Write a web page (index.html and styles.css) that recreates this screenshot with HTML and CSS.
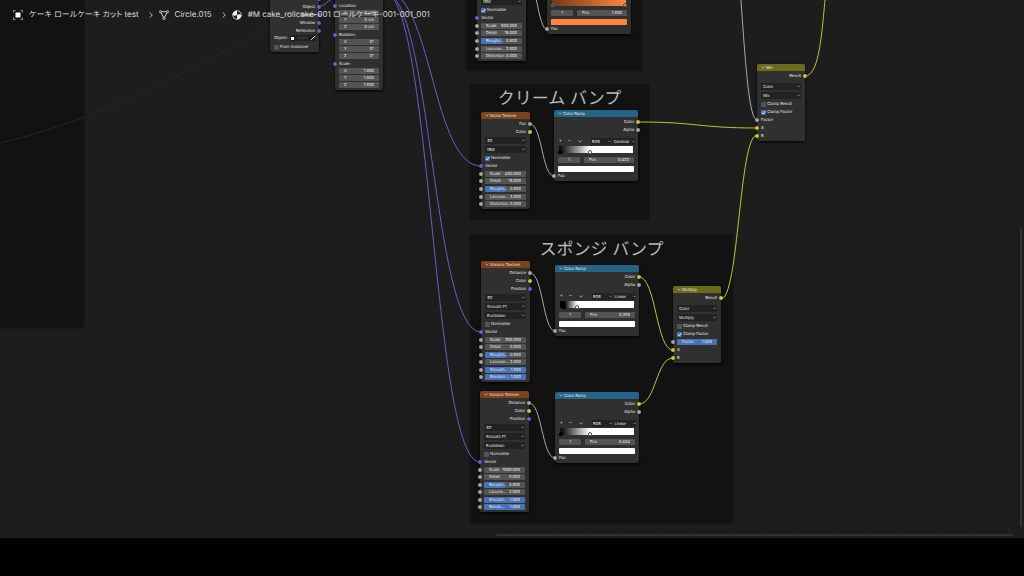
FILE: index.html
```html
<!DOCTYPE html>
<html lang="en">
<head>
<meta charset="utf-8">
<title>Shader Editor</title>
<link rel="stylesheet" href="styles.css">
</head>
<body>
<main class="editor">
  <section class="frame frame-left" aria-label="Frame"></section>
  <section class="frame frame-top" aria-label="Frame"></section>
  <section class="frame frame-cream"><h2>クリーム バンプ</h2></section>
  <section class="frame frame-sponge"><h2>スポンジ バンプ</h2></section>

  <svg class="links" aria-hidden="true">
    <path class="faint" d="M0 143C100 120 190 70 275 24"/>
    <path class="vec" d="M319 6C327 6 327 -1 335 -1"/>
    <path class="vec" d="M384 -10C432 -10 432 166 481 166"/>
    <path class="vec" d="M384 -8C432 -8 432 332 481 332"/>
    <path class="vec" d="M384 -8C432 -8 432 462 480 462"/>
    <path class="val" d="M526 -24C537 -24 537 30 548 30"/>
    <path class="val" d="M530 124C542 124 542 176 554 176"/>
    <path class="val" d="M530 273C543 273 543 331 555 331"/>
    <path class="val" d="M529 403C542 403 542 458 555 458"/>
    <path class="val" d="M727 -90C742 -90 742 120 757 120"/>
    <path class="col" d="M638 122C698 122 698 128 757 128"/>
    <path class="col" d="M805 76C825 76 822 -10 830 -30"/>
    <path class="col" d="M721 299C739 299 739 135 757 135"/>
    <path class="col" d="M639 277C656 277 656 350 673 350"/>
    <path class="col" d="M639 404C656 404 656 358 673 358"/>
  </svg>

  <article class="node n-coord">
    <header class="tex"><button aria-label="Collapse"></button>Texture Coordinate</header>
    <ul class="outs h7">
      <li>Generated<i class="s v"></i></li><li>Normal<i class="s v"></i></li><li>UV<i class="s v"></i></li>
      <li>Object<i class="s v"></i></li><li>Camera<i class="s v"></i></li><li>Window<i class="s v"></i></li><li>Reflection<i class="s v"></i></li>
    </ul>
    <label class="pick">Object:<span class="pickbox"><svg viewBox="0 0 4 4"><path fill="#fff" d="M1 1h3v3h-3z"/></svg><input placeholder="Object"><svg viewBox="0 0 4 4"><path d="M0 4L2 2M2 1L3 2M3 1L4 0" stroke="#ddd" fill="none"/></svg></span></label>
    <label class="check"><input type="checkbox">From Instancer</label>
  </article>

  <article class="node slim n-map">
    <header class="map"><button aria-label="Collapse"></button>Mapping</header>
    <ul class="outs"><li>Vector<i class="s v"></i></li></ul>
    <div class="sel"><select aria-label="Type"><option>Point</option></select></div>
    <p class="in"><i class="s v"></i>Vector</p>
    <p class="in"><i class="s v"></i>Location:</p>
    <div class="xyz"><label>X<input value="0 cm"></label><label>Y<input value="0 cm"></label><label>Z<input value="0 cm"></label></div>
    <p class="in"><i class="s v"></i>Rotation:</p>
    <div class="xyz"><label>X<input value="0°"></label><label>Y<input value="0°"></label><label>Z<input value="0°"></label></div>
    <p class="in"><i class="s v"></i>Scale:</p>
    <div class="xyz"><label>X<input value="1.000"></label><label>Y<input value="1.000"></label><label>Z<input value="1.000"></label></div>
  </article>

  <article class="node n-noise0">
    <header class="tex"><button aria-label="Collapse"></button>Noise Texture</header>
    <ul class="outs"><li>Fac<i class="s"></i></li><li>Color<i class="s c"></i></li></ul>
    <div class="sel"><select aria-label="Dimensions"><option>3D</option></select></div>
    <div class="sel"><select aria-label="Type"><option>fBM</option></select></div>
    <label class="check"><input type="checkbox" checked>Normalize</label>
    <p class="in"><i class="s v"></i>Vector</p>
    <ul class="fields h5">
      <li><i class="s"></i><label>Scale<input value="500.000"></label></li>
      <li><i class="s"></i><label>Detail<input value="15.000"></label></li>
      <li><i class="s"></i><label class="half">Roughn...<input value="0.500"></label></li>
      <li><i class="s"></i><label>Lacunar...<input value="2.000"></label></li>
      <li><i class="s"></i><label>Distortion<input value="0.000"></label></li>
    </ul>
  </article>

  <article class="node ramp n-ramp0">
    <header class="conv"><button aria-label="Collapse"></button>Color Ramp</header>
    <ul class="outs"><li>Color<i class="s c"></i></li><li>Alpha<i class="s"></i></li></ul>
    <div class="tools"><button>+</button><button>−</button><button class="down" aria-label="Tools"></button><select aria-label="Mode"><option>RGB</option></select><select aria-label="Interpolation"><option>Linear</option></select></div>
    <div class="grad g0"><i class="stop o1"></i><i class="stop o2"></i></div>
    <div class="pos"><input aria-label="Stop" value="1"><label>Pos<input value="1.000"></label></div>
    <button class="swatch orange" aria-label="Color"></button>
    <p class="in"><i class="s"></i>Fac</p>
  </article>

  <article class="node n-noise1">
    <header class="tex"><button aria-label="Collapse"></button>Noise Texture</header>
    <ul class="outs"><li>Fac<i class="s"></i></li><li>Color<i class="s c"></i></li></ul>
    <div class="sel"><select aria-label="Dimensions"><option>3D</option></select></div>
    <div class="sel"><select aria-label="Type"><option>fBM</option></select></div>
    <label class="check"><input type="checkbox" checked>Normalize</label>
    <p class="in"><i class="s v"></i>Vector</p>
    <ul class="fields h5">
      <li><i class="s"></i><label>Scale<input value="400.000"></label></li>
      <li><i class="s"></i><label>Detail<input value="15.000"></label></li>
      <li><i class="s"></i><label class="half">Roughn...<input value="0.500"></label></li>
      <li><i class="s"></i><label>Lacunar...<input value="2.000"></label></li>
      <li><i class="s"></i><label>Distortion<input value="0.000"></label></li>
    </ul>
  </article>

  <article class="node ramp n-ramp1">
    <header class="conv"><button aria-label="Collapse"></button>Color Ramp</header>
    <ul class="outs"><li>Color<i class="s c"></i></li><li>Alpha<i class="s"></i></li></ul>
    <div class="tools"><button>+</button><button>−</button><button class="down" aria-label="Tools"></button><select aria-label="Mode"><option>RGB</option></select><select aria-label="Interpolation"><option>Cardinal</option></select></div>
    <div class="grad g1"><i class="stop black"></i><i class="stop"></i></div>
    <div class="pos"><input aria-label="Stop" value="1"><label>Pos<input value="0.422"></label></div>
    <button class="swatch" aria-label="Color"></button>
    <p class="in"><i class="s"></i>Fac</p>
  </article>

  <article class="node n-vor1">
    <header class="tex"><button aria-label="Collapse"></button>Voronoi Texture</header>
    <ul class="outs"><li>Distance<i class="s"></i></li><li>Color<i class="s c"></i></li><li>Position<i class="s v"></i></li></ul>
    <div class="sel"><select aria-label="Dimensions"><option>3D</option></select></div>
    <div class="sel"><select aria-label="Feature"><option>Smooth F1</option></select></div>
    <div class="sel"><select aria-label="Distance metric"><option>Euclidean</option></select></div>
    <label class="check"><input type="checkbox">Normalize</label>
    <p class="in"><i class="s v"></i>Vector</p>
    <ul class="fields h6">
      <li><i class="s"></i><label>Scale<input value="300.000"></label></li>
      <li><i class="s"></i><label>Detail<input value="0.000"></label></li>
      <li><i class="s"></i><label class="half">Roughn...<input value="0.500"></label></li>
      <li><i class="s"></i><label>Lacunar...<input value="2.000"></label></li>
      <li><i class="s"></i><label class="full">Smooth...<input value="1.000"></label></li>
      <li><i class="s"></i><label class="full">Random...<input value="1.000"></label></li>
    </ul>
  </article>

  <article class="node ramp n-ramp2">
    <header class="conv"><button aria-label="Collapse"></button>Color Ramp</header>
    <ul class="outs"><li>Color<i class="s c"></i></li><li>Alpha<i class="s"></i></li></ul>
    <div class="tools"><button>+</button><button>−</button><button class="down" aria-label="Tools"></button><select aria-label="Mode"><option>RGB</option></select><select aria-label="Interpolation"><option>Linear</option></select></div>
    <div class="grad g2"><i class="stop black"></i><i class="stop"></i></div>
    <div class="pos"><input aria-label="Stop" value="1"><label>Pos<input value="0.225"></label></div>
    <button class="swatch" aria-label="Color"></button>
    <p class="in"><i class="s"></i>Fac</p>
  </article>

  <article class="node n-vor2">
    <header class="tex"><button aria-label="Collapse"></button>Voronoi Texture</header>
    <ul class="outs"><li>Distance<i class="s"></i></li><li>Color<i class="s c"></i></li><li>Position<i class="s v"></i></li></ul>
    <div class="sel"><select aria-label="Dimensions"><option>3D</option></select></div>
    <div class="sel"><select aria-label="Feature"><option>Smooth F1</option></select></div>
    <div class="sel"><select aria-label="Distance metric"><option>Euclidean</option></select></div>
    <label class="check"><input type="checkbox">Normalize</label>
    <p class="in"><i class="s v"></i>Vector</p>
    <ul class="fields h6">
      <li><i class="s"></i><label>Scale<input value="1000.000"></label></li>
      <li><i class="s"></i><label>Detail<input value="0.000"></label></li>
      <li><i class="s"></i><label class="half">Roughn...<input value="0.500"></label></li>
      <li><i class="s"></i><label>Lacuna...<input value="2.000"></label></li>
      <li><i class="s"></i><label class="full">Smooth...<input value="1.000"></label></li>
      <li><i class="s"></i><label class="full">Rando...<input value="1.000"></label></li>
    </ul>
  </article>

  <article class="node ramp n-ramp3">
    <header class="conv"><button aria-label="Collapse"></button>Color Ramp</header>
    <ul class="outs"><li>Color<i class="s c"></i></li><li>Alpha<i class="s"></i></li></ul>
    <div class="tools"><button>+</button><button>−</button><button class="down" aria-label="Tools"></button><select aria-label="Mode"><option>RGB</option></select><select aria-label="Interpolation"><option>Linear</option></select></div>
    <div class="grad g3"><i class="stop black"></i><i class="stop"></i></div>
    <div class="pos"><input aria-label="Stop" value="1"><label>Pos<input value="0.404"></label></div>
    <button class="swatch" aria-label="Color"></button>
    <p class="in"><i class="s"></i>Fac</p>
  </article>

  <article class="node slim mixer n-mult">
    <header class="mix"><button aria-label="Collapse"></button>Multiply</header>
    <ul class="outs"><li>Result<i class="s c"></i></li></ul>
    <div class="sel"><select aria-label="Data type"><option>Color</option></select></div>
    <div class="sel"><select aria-label="Blend mode"><option>Multiply</option></select></div>
    <label class="check"><input type="checkbox">Clamp Result</label>
    <label class="check"><input type="checkbox" checked>Clamp Factor</label>
    <ul class="fields"><li><i class="s"></i><label class="full">Factor<input value="1.000"></label></li></ul>
    <p class="in"><i class="s c"></i>A</p>
    <p class="in"><i class="s c"></i>B</p>
  </article>

  <article class="node slim mixer n-mix">
    <header class="mix"><button aria-label="Collapse"></button>Mix</header>
    <ul class="outs"><li>Result<i class="s c"></i></li></ul>
    <div class="sel"><select aria-label="Data type"><option>Color</option></select></div>
    <div class="sel"><select aria-label="Blend mode"><option>Mix</option></select></div>
    <label class="check"><input type="checkbox">Clamp Result</label>
    <label class="check"><input type="checkbox" checked>Clamp Factor</label>
    <p class="in"><i class="s"></i>Factor</p>
    <p class="in"><i class="s c"></i>A</p>
    <p class="in"><i class="s c"></i>B</p>
  </article>

  <nav class="crumbs" aria-label="Context path">
    <a href="#object"><svg viewBox="0 0 10 10"><path d="M2.5 2.5h5v5h-5z" fill="#fff"/><path d="M.5 2.5v-2h2M7.500 .5h2v2M9.500 7.500v2h-2M2.500 9.500h-2v-2" fill="none" stroke="#999"/></svg>ケーキ ロールケーキ カット test</a>
    <svg class="sep" viewBox="0 0 4 8"><path d="M.7 1.500L3.300 4L.7 6.500"/></svg>
    <a href="#mesh"><svg viewBox="0 0 10 10"><g fill="none" stroke="#ddd" stroke-width=".9"><path d="M2.500 1.700h5M2 2.800L4.300 7M8 2.800L5.700 7"/><circle cx="1.500" cy="1.700" r="1"/><circle cx="8.500" cy="1.700" r="1"/><circle cx="5" cy="8.300" r="1.200"/></g></svg>Circle.015</a>
    <svg class="sep" viewBox="0 0 4 8"><path d="M.7 1.500L3.300 4L.7 6.500"/></svg>
    <a href="#material"><svg viewBox="0 0 10 10"><circle cx="5" cy="5" r="4.300" fill="#222" stroke="#ddd" stroke-width=".8"/><path d="M5 5V.7A4.300 4.300 0 0 0 .7 5Q2.500 6.500 5 5ZM5 5Q7.500 3.500 9.300 5A4.300 4.300 0 0 1 5 9.300Z" fill="#eee"/></svg>#M cake_rollcake-001 ロールケーキ-001-001_001</a>
  </nav>
  <div class="bar-v"></div>
  <div class="bar-h"></div>
</main>
<footer class="strip"></footer>
</body>
</html>
```
FILE: styles.css
```css
* { box-sizing: border-box; }
:root {
  --chevron: url("data:image/svg+xml,%3Csvg xmlns='http://www.w3.org/2000/svg' viewBox='0 0 4 3'%3E%3Cpath d='M.5 .5L2 2.200L3.500 .5' fill='none' stroke='%23bbb' stroke-width='.8'/%3E%3C/svg%3E");
  --tick: url("data:image/svg+xml,%3Csvg xmlns='http://www.w3.org/2000/svg' viewBox='0 0 5 5'%3E%3Cpath d='M1 2.700L2.100 3.800L4.200 1.200' fill='none' stroke='%23fff' stroke-width='.9'/%3E%3C/svg%3E");
}
body {
  margin: 0;
  height: 100vh;
  display: flex;
  flex-direction: column;
  background: #000;
  color: #ececec;
  font: 4px/8px Inter, "Noto Sans CJK JP", sans-serif;
  text-rendering: geometricPrecision;
}
ul, p, h2 { margin: 0; padding: 0; list-style: none; }
button, input, select {
  appearance: none;
  margin: 0;
  padding: 0;
  border: 0;
  border-radius: 0;
  background: none;
  color: inherit;
  font: inherit;
  text-rendering: inherit;
  min-width: 0;
}
.editor {
  position: relative;
  flex: 1;
  overflow: hidden;
  background: #1d1d1d radial-gradient(circle, #242424 1px, transparent 1px) 11px 21px / 35px 35px;
}
.strip { height: 38px; }

/* frames */
.frame {
  position: absolute;
  background: #121212;
  border-radius: 2px;
  box-shadow: 0 0 2px #121212;
}
.frame h2 {
  font-size: 17px;
  font-weight: 400;
  line-height: 31px;
  text-align: center;
  color: #b8b8b8;
}
.frame-left { left: -10px; top: -10px; width: 94px; height: 338px; }
.frame-top { left: 466px; top: -10px; width: 176px; height: 81px; }
.frame-cream { left: 470px; top: 84px; width: 179px; height: 136px; }
.frame-sponge { left: 470px; top: 235px; width: 263px; height: 288px; }

/* links */
.links { position: absolute; inset: 0; width: 100%; height: 100%; fill: none; stroke-width: 1; }
.vec { stroke: #6361c8; }
.val { stroke: #a8a8a8; }
.col { stroke: #c4c22c; }
.faint { stroke: #27261f; }

/* nodes */
.node {
  position: absolute;
  width: 49px;
  padding-bottom: 1px;
  background: #303030;
  border-radius: 2px;
  box-shadow: 0 1px 3px #000;
}
.slim { width: 48px; }
.ramp { width: 84px; }
.n-coord { left: 270px; top: -29px; }
.n-map { left: 335px; top: -31px; }
.n-noise0 { left: 477px; top: -36px; }
.n-ramp0 { left: 547px; top: -37px; }
.n-noise1 { left: 481px; top: 112px; }
.n-ramp1 { left: 554px; top: 110px; }
.n-vor1 { left: 481px; top: 261px; }
.n-ramp2 { left: 555px; top: 265px; }
.n-vor2 { left: 480px; top: 391px; }
.n-ramp3 { left: 555px; top: 392px; }
.n-mult { left: 673px; top: 286px; }
.n-mix { left: 757px; top: 64px; }

.node header {
  display: flex;
  align-items: center;
  gap: 1px;
  height: 7px;
  margin-bottom: 1px;
  padding-left: 4px;
  border-radius: 2px 2px 0 0;
  line-height: 7px;
  white-space: nowrap;
}
.node header button, .down {
  width: 4px;
  height: 3px;
  background: var(--chevron) center / 4px 3px no-repeat;
}
.tex { background: #7a431c; }
.conv { background: #236487; }
.mix { background: #6c6a1b; }
.map { background: #3a3a78; }

.outs li { position: relative; height: 8px; padding-right: 4px; text-align: right; }
.outs.h7 { display: grid; grid-auto-rows: 1fr; height: 53px; }
.outs.h7 li { height: auto; }
.in { position: relative; height: 8px; padding-left: 4px; }
.s {
  position: absolute;
  left: -2px;
  top: 50%;
  width: 4px;
  height: 4px;
  margin-top: -2px;
  border-radius: 50%;
  background: #a6a6a6;
  box-shadow: 0 0 1px #000;
}
.outs .s { left: auto; right: -2px; }
.s.v { background: #6563d0; }
.s.c { background: #cbc92c; }

.sel { height: 9px; padding: 1px 4px; }
.mixer .outs { margin-bottom: 2px; }
select {
  display: block;
  width: 100%;
  height: 7px;
  padding: 0 2px;
  border-radius: 1px;
  line-height: 7px;
  background: #222 var(--chevron) right 1px center / 3px 3px no-repeat;
}

.check { display: flex; align-items: center; gap: 1px; height: 8px; padding-left: 4px; white-space: nowrap; }
.check input { width: 5px; height: 5px; border-radius: 1px; background: #545454; }
.check input:checked { background: #4772b3 var(--tick) center / 5px 5px no-repeat; }

.fields { display: grid; grid-auto-rows: 1fr; height: 8px; }
.fields.h5 { height: 38px; }
.fields.h6 { height: 45px; }
.fields li { position: relative; display: grid; align-items: center; padding: 0 4px; }
.fields label, .pos label, .pos > input, .xyz label {
  display: flex;
  align-items: center;
  justify-content: space-between;
  height: 6px;
  padding: 0 5px;
  border-radius: 1px;
  line-height: 6px;
  background: #545454;
}
.fields input, .pos label input, .xyz input { flex: 1; width: 0; height: 6px; text-align: right; }
.fields .half { background: linear-gradient(90deg, #4772b3 50%, #545454 50%); }
.fields .full { background: #4772b3; }
.xyz { display: grid; gap: 1px; height: 21px; padding: 0 4px 1px; }

.pick { display: flex; align-items: center; gap: 2px; height: 11px; padding: 0 4px; }
.pickbox { display: flex; align-items: center; flex: 1; gap: 3px; height: 6px; background: #1f1f1f; }
.pickbox input { flex: 1; width: 0; height: 6px; }
.pickbox input::placeholder { color: #555; }
.pickbox svg { width: 4px; height: 4px; }

/* colour ramp */
.ramp { display: flex; flex-direction: column; }
.tools { display: flex; align-items: center; gap: 1px; height: 8px; margin: 3px 3px 1px 4px; }
.tools button { width: 8px; height: 7px; padding-right: 3px; font-size: 5px; line-height: 7px; }
.tools .down { width: 4px; height: 3px; margin: 0 8px 0 2px; padding: 0; }
.tools select { width: 21px; padding: 0 1px; background-position: right 0 center; }
.tools select:last-child { width: 23px; }
.grad { position: relative; height: 7px; margin: 0 5px; }
.stop {
  position: absolute;
  bottom: -1px;
  width: 4px;
  height: 4px;
  margin-left: -2px;
  border: 1px solid #555;
  border-radius: 2px 2px 0 0;
  background: #fff;
}
.stop.black { background: #000; border-color: #000; left: 2%; }
.g0 { background: linear-gradient(90deg, #6f3a1e, #ff853f); }
.g1 { background: linear-gradient(90deg, #111 3%, #fff 42%); }
.g2 { background: linear-gradient(90deg, #000 6%, #fff 23%); }
.g3 { background: linear-gradient(90deg, #111 3%, #fff 40%); }
.g1 .stop:last-child { left: 42%; }
.g2 .black { left: 6%; }
.g2 .stop:last-child { left: 23%; }
.g3 .stop:last-child { left: 40%; }
.o1 { left: 2%; background: #7c4020; }
.o2 { left: 99%; background: #ff853f; }
.pos { display: flex; gap: 4px; margin: 4px 4px 3px; }
.pos > input { width: 22px; text-align: center; }
.pos label { flex: 1; }
.swatch { height: 6px; margin: 0 4px; background: #fff; border-radius: 1px; }
.swatch.orange { background: #ff853f; }

/* context path */
.crumbs {
  position: absolute;
  left: 13px;
  top: 8px;
  display: flex;
  align-items: center;
  height: 13px;
  font-size: 8px;
  line-height: 13px;
  font-feature-settings: "palt";
  white-space: nowrap;
}
.crumbs a { display: flex; align-items: center; gap: 6px; color: #dedede; text-decoration: none; }
.crumbs a svg { width: 10px; height: 10px; }
.sep { width: 4px; height: 8px; margin: 0 6px 0 10px; fill: none; stroke: #bbb; }

.bar-v, .bar-h { position: absolute; background: #323232; border-radius: 1px; }
.bar-v { right: 2px; top: 228px; bottom: 11px; width: 2px; }
.bar-h { left: 496px; right: 11px; bottom: 2px; height: 2px; }
```
